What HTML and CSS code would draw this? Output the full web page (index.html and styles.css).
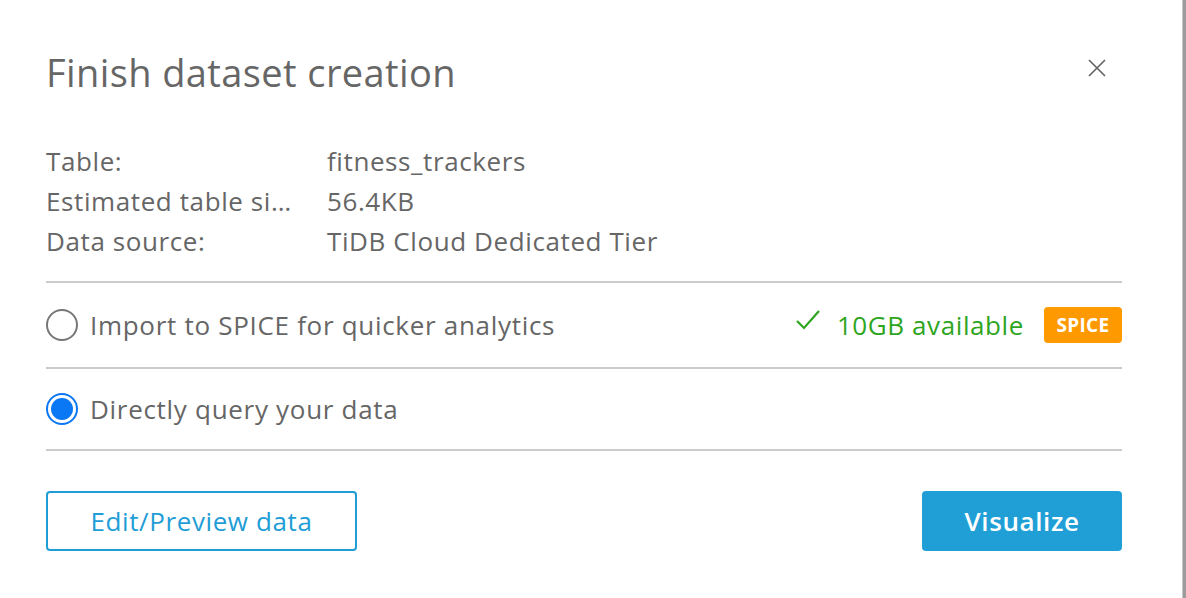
FILE: index.html
```html
<!DOCTYPE html>
<html lang="en">
<head>
<meta charset="utf-8">
<title>Finish dataset creation</title>
<link rel="stylesheet" href="styles.css">
</head>
<body>
<div class="page">
  <div class="dialog">
    <div class="header">
      <h1 class="title">Finish dataset creation</h1>
      <button class="close" aria-label="Close">
        <svg width="18" height="18" viewBox="0 0 18 18"><path d="M1 1 L17 17 M17 1 L1 17" stroke="#666" stroke-width="1.7" fill="none"/></svg>
      </button>
    </div>
    <div class="info">
      <div class="label">Table:</div><div class="value">fitness_trackers</div>
      <div class="label">Estimated table si…</div><div class="value">56.4KB</div>
      <div class="label">Data source:</div><div class="value">TiDB Cloud Dedicated Tier</div>
    </div>
    <div class="options">
      <div class="option">
        <span class="radio"></span>
        <span class="option-text">Import to SPICE for quicker analytics</span>
        <span class="avail">
          <svg class="check" width="26" height="22" viewBox="0 0 26 22"><path d="M2 12 L9 19 L24 2" stroke="#2ea51e" stroke-width="2.2" fill="none"/></svg>
          <span class="avail-text">10GB available</span>
        </span>
        <span class="badge">SPICE</span>
      </div>
      <div class="option">
        <span class="radio checked"></span>
        <span class="option-text">Directly query your data</span>
      </div>
    </div>
    <div class="actions">
      <button class="btn btn-outline">Edit/Preview data</button>
      <button class="btn btn-primary">Visualize</button>
    </div>
  </div>
  <div class="scrollbar"></div>
</div>
</body>
</html>
```
FILE: styles.css
```css
html, body {
  margin: 0;
  padding: 0;
  background: #fff;
}
body {
  font-family: "Open Sans", Lato, Arial, sans-serif;
  color: #666;
}
.page {
  display: flex;
  width: 1186px;
  height: 598px;
}
.dialog {
  flex: 1;
  padding: 0 60px 0 46px;
}
.scrollbar {
  width: 3px;
  border-left: 1px solid #c8c8c8;
  background: #9b9b9b;
}
.header {
  display: flex;
  justify-content: space-between;
  align-items: flex-start;
  padding-top: 48px;
  height: 93px;
  box-sizing: border-box;
}
.title {
  margin: 0;
  font-size: 38px;
  font-weight: 400;
  line-height: 48px;
  color: #666;
  letter-spacing: 0.4px;
}
.close {
  border: 0;
  background: none;
  padding: 0;
  margin: 11px 16px 0 0;
  width: 18px;
  height: 18px;
  cursor: pointer;
}
.info {
  display: grid;
  grid-template-columns: 281px 1fr;
  grid-auto-rows: 40px;
  align-items: center;
  margin-top: 48px;
  padding-bottom: 20px;
  font-size: 26px;
  letter-spacing: 0.6px;
  border-bottom: 2px solid #cbcbcb;
}
.option {
  display: flex;
  align-items: center;
  padding: 24px 0;
  border-bottom: 2px solid #cbcbcb;
  font-size: 26px;
  line-height: 32px;
  letter-spacing: 0.7px;
}
.radio {
  width: 32px;
  height: 32px;
  box-sizing: border-box;
  border: 2px solid #777;
  border-radius: 50%;
  margin-right: 12px;
  flex: none;
  position: relative;
}
.radio.checked {
  border-color: #0a78f5;
}
.radio.checked::after {
  content: "";
  position: absolute;
  inset: 3px;
  border-radius: 50%;
  background: #0a78f5;
}
.option-text {
  flex: 1;
}
.avail {
  display: flex;
  align-items: center;
  color: #2ea51e;
  letter-spacing: 0.6px;
}
.check {
  margin-right: 16px;
  margin-top: -10px;
}
.badge {
  margin-left: 20px;
  background: #ff9900;
  color: #fff;
  font-weight: 700;
  font-size: 19px;
  letter-spacing: 0.3px;
  border-radius: 4px;
  width: 78px;
  height: 36px;
  display: flex;
  align-items: center;
  justify-content: center;
}
.actions {
  display: flex;
  justify-content: space-between;
  margin-top: 40px;
}
.btn {
  font-family: inherit;
  height: 60px;
  box-sizing: border-box;
  border-radius: 4px;
  font-size: 26px;
  letter-spacing: 0.6px;
  cursor: pointer;
}
.btn-outline {
  width: 311px;
  background: #fff;
  color: #1f9dd6;
  border: 2px solid #1f9dd6;
}
.btn-primary {
  width: 200px;
  background: #209fd7;
  color: #fff;
  border: 0;
  font-weight: 600;
}
```
